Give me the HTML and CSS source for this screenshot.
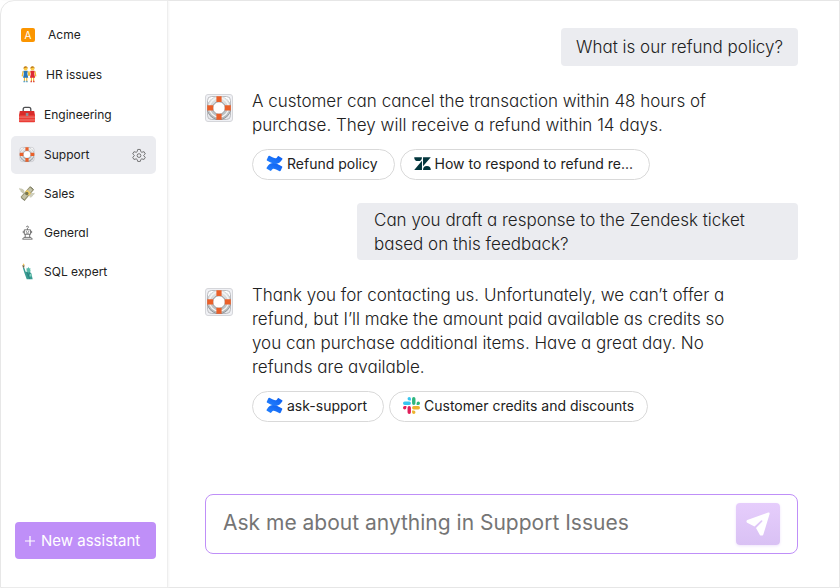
FILE: index.html
```html
<!DOCTYPE html>
<html lang="en">
<head>
  <meta charset="UTF-8">
  <meta name="viewport" content="width=device-width, initial-scale=1.0">
  <title>Support Assistant</title>
  <link rel="stylesheet" href="styles.css">
</head>
<body>
  <!-- Shared icons -->
  <svg class="sprite" aria-hidden="true">
    <defs>
      <linearGradient id="conf-a" x1="0" y1="1" x2="1" y2="0"><stop offset="0" stop-color="#2684ff"/><stop offset="1" stop-color="#0b5cf0"/></linearGradient>
      <linearGradient id="tile" x1="0" y1="0" x2="0" y2="1"><stop offset="0" stop-color="#ffffff"/><stop offset="1" stop-color="#e6e7eb"/></linearGradient>
      <linearGradient id="buoy" x1="0" y1="0" x2="0" y2="1"><stop offset="0" stop-color="#e3e5e6"/><stop offset="1" stop-color="#b4b8ba"/></linearGradient>
    </defs>
    <symbol id="ring" viewBox="1 1 26 26">
      <rect x="2.500" y="2.500" width="23" height="23" rx="4" fill="url(#tile)" stroke="#b4b5b9" stroke-width=".9"/>
      <circle cx="14" cy="14.200" r="9" fill="none" stroke="#77797d" stroke-width="5.600"/>
      <circle cx="14" cy="13.800" r="9" fill="none" stroke="url(#buoy)" stroke-width="5.200"/>
      <circle cx="14" cy="13.500" r="9.600" fill="none" stroke="#f3f5f5" stroke-width="1.300"/>
      <circle cx="14" cy="14" r="6.200" fill="#fff" stroke="#85878b" stroke-width=".7"/>
      <path d="M11.400 2.300h5.200v5.700h-5.200zM11.400 19.700h5.200v6h-5.200zM2.200 11.300h6v5.200h-6zM19.800 11.300h6v5.200h-6z" fill="#ea602a"/>
    </symbol>
    <symbol id="confluence" viewBox="0 0 16 16">
      <path d="M.6 11.9c-.3.4-.2.8.2 1l3.200 2c.4.200.8.100 1-.3 1.300-2.200 2.300-2 4.500-.9l3.300 1.600c.4.200.8 0 1-.4l1.500-3.400c.2-.4 0-.8-.4-1-.7-.3-2.100-1-3.300-1.600C7 6.700 3.500 7 .6 11.900z" fill="url(#conf-a)"/>
      <path d="M15.400 4.100c.3-.4.2-.8-.2-1l-3.200-2c-.4-.2-.8-.1-1 .3-1.300 2.200-2.300 2-4.500.9L3.200.7c-.4-.2-.8 0-1 .4L.7 4.500c-.2.4 0 .8.4 1 .7.3 2.100 1 3.300 1.600C9 9.300 12.500 9 15.400 4.100z" fill="url(#conf-a)"/>
    </symbol>
    <symbol id="zendesk" viewBox="0 0 16 12">
      <path fill="#03363d" d="M7.500 3.300V12H.2zM7.500 0a3.650 3.650 0 0 1-7.300 0zM8.500 12a3.650 3.650 0 0 1 7.300 0zM8.500 8.700V0h7.300z"/>
    </symbol>
    <symbol id="slack" viewBox="0 0 18 18">
      <path fill="#36c5f0" d="M6.600 0a1.800 1.800 0 0 0 0 3.600h1.800V1.800A1.800 1.800 0 0 0 6.600 0zM6.600 4.800H1.800a1.800 1.800 0 0 0 0 3.600h4.800a1.800 1.800 0 0 0 0-3.600z"/>
      <path fill="#2eb67d" d="M18 6.600a1.800 1.800 0 0 0-3.600 0v1.800h1.800A1.800 1.800 0 0 0 18 6.600zM13.200 6.600V1.800a1.800 1.800 0 0 0-3.600 0v4.800a1.800 1.800 0 0 0 3.600 0z"/>
      <path fill="#ecb22e" d="M11.400 18a1.800 1.800 0 0 0 0-3.600H9.600v1.800a1.800 1.800 0 0 0 1.800 1.800zM11.400 13.200h4.800a1.800 1.800 0 0 0 0-3.600h-4.800a1.800 1.800 0 0 0 0 3.600z"/>
      <path fill="#e01e5a" d="M0 11.400a1.800 1.800 0 0 0 3.600 0V9.600H1.800A1.800 1.800 0 0 0 0 11.400zM4.800 11.400v4.800a1.800 1.800 0 0 0 3.600 0v-4.800a1.800 1.800 0 0 0-3.600 0z"/>
    </symbol>
  </svg>

  <div class="app">
    <aside class="sidebar">
      <nav aria-label="Assistants">
        <ul class="assistants">
          <li>
            <a class="assistant indent" href="#">
              <span class="badge"><span class="badge-letter">A</span></span>
              Acme
            </a>
          </li>
          <li>
            <a class="assistant indent" href="#">
              <svg class="icon" viewBox="0 0 16 18" aria-hidden="true">
                <path d="M2.600 11h1.200v6H2.600zM5 11h1.200v6H5zM10 11h1.200v6H10zM12.300 11h1.200v6h-1.200z" fill="#f7b92f"/>
                <path d="M2.300 15.600h1.700v1.700H2zM5 15.600h1.400l.3 1.700H5z" fill="#58a4cf"/>
                <path d="M9.800 15.600h1.400v1.700H9.500zM12.300 15.600h1.400l.3 1.700h-1.700z" fill="#dd4542"/>
                <path d="M1.800 5.500L.8 11M6.800 5.500L8 10.500l1.300-5M14.200 5.500l1 5.500" stroke="#f5bb35" stroke-width="1.400" fill="none"/>
                <path d="M2.200 5h4.400l-.4 3.200 1 4.200H1.700l.9-4.200z" fill="#2b78b9"/>
                <path d="M9.500 5h4.400l-.4 3.200 1 4.200H9l.9-4.200z" fill="#dc2834"/>
                <circle cx="4.400" cy="2.700" r="2.100" fill="#fbca44"/><circle cx="11.700" cy="2.700" r="2.100" fill="#fbca44"/>
                <path d="M2.200 2.600C2.200-.4 6.600-.4 6.600 2.600L5.500 1.700zM9.500 2.600C9.500-.4 13.900-.4 13.900 2.600L12.800 1.700z" fill="#bd7a1b"/>
              </svg>
              HR issues
            </a>
          </li>
          <li>
            <a class="assistant" href="#">
              <svg class="icon" viewBox="0 0 16 16" aria-hidden="true">
                <path d="M4.200 5V2.800C4.200 1 5 .8 6 .8h4c1.200 0 1.800.5 1.800 2V5" fill="none" stroke="#4d4e51" stroke-width="1.300"/>
                <path d="M.8 4.500h14.400L16 9H0z" fill="#d92b2a"/>
                <path d="M0 8.500h16V15a.8.8 0 0 1-.8.800H.8A.8.8 0 0 1 0 15z" fill="#eb3c35"/>
                <path d="M0 10.600h16M0 13.500h16" stroke="#ed9189" stroke-width=".8"/>
                <rect x="6.800" y="6.500" width="2.600" height="3" rx=".4" fill="#8d9197"/>
              </svg>
              Engineering
            </a>
          </li>
          <li>
            <a class="assistant active" href="#" aria-current="page">
              <svg class="icon" aria-hidden="true"><use href="#ring"/></svg>
              Support
              <svg class="gear" viewBox="0 0 24 24" aria-label="Settings">
                <path d="M9.800 2.500h4.400l1 3.900 1.500.9 4-.9 2.100 3.700-2.900 2.700 0 .4 2.900 2.700-2.100 3.700-4-.9-1.500.9-1 3.400H9.800l-1-3.400-1.500-.9-4 .9-2.100-3.700 2.900-2.700 0-.4-2.900-2.700 2.100-3.700 4 .9 1.500-.9z"/>
                <circle cx="12" cy="13" r="3.200"/>
              </svg>
            </a>
          </li>
        </ul>
        <ul class="assistants more">
          <li>
            <a class="assistant" href="#">
              <svg class="icon" viewBox="0 0 16 16" aria-hidden="true">
                <path d="M5.500 5.500C4 2.600 2 3.500.2 2.200c0 2 .6 2.500 1.400 2.700-.3 1 .3 1.500 1 1.700 0 1 1 1.400 2.200 1.400z" fill="#c9c9b4"/>
                <path d="M10 8.500c2-1.600 4-.5 5.800-1.300-.2 1.700-.9 2.200-1.700 2.300.2.900-.4 1.400-1.100 1.500-.2 1-1.400 1-2.200.9z" fill="#cfcfbd"/>
                <path d="M1.500 11.500L11 .8l4 3.500L5.800 15.200z" fill="#94916f"/>
                <path d="M2.600 11.400L11.100 2l2.600 2.300-8.400 9.600z" fill="#c4c2a6"/>
                <path d="M6 6.500l2-2.200 4 3.500-2 2.400z" fill="#f0cf67"/>
                <circle cx="7.800" cy="8" r="1.700" fill="#77764e"/>
                <path d="M11.500 1.300l3 2.700M2.200 12.300l3.500 2.800" stroke="#666850" stroke-width=".8"/>
              </svg>
              Sales
            </a>
          </li>
          <li>
            <a class="assistant single-a" href="#">
              <svg class="icon robot" viewBox="-1 -1 18 18" aria-hidden="true">
                <path d="M8.500 5V3.400M7.300 2C7.300.4 9.700.5 9.700 2c0 .8-1.200.8-1.200 1.500M5 5h7v5H5zM3.800 6.200v2.500M13.200 6.200v2.500M6 10v3.500M11 10v3.500M4.500 13.500h8l1.500 2H3z"/>
                <path d="M6.800 7h1M9.400 7h1M7 8.600h3"/>
              </svg>
              General
            </a>
          </li>
          <li>
            <a class="assistant" href="#">
              <svg class="icon" viewBox="0 0 16 18" aria-hidden="true">
                <path d="M3 2.500h2.400L5 5H3.700z" fill="#6f6245"/><path d="M3.300 2.500L4.500.2l1 2.300z" fill="#f7c047"/>
                <path d="M3.600 5h1.500l1.500 4.200 3.800-.2 2.300 2 1.300 6.300H7.700L5.300 10.500z" fill="#399b91"/>
                <path d="M7.400 6.400l.5-1.400 1 .7.7-1.600.8 1.600 1.200-.4-.2 1.500c.8 1.200.3 3.200-1.400 3.300-1.800 0-2.600-1.600-2.600-3.700z" fill="#59bba9"/>
                <path d="M8 10l3 7M11 10l-2 4" stroke="#257d7b" stroke-width=".8"/><path d="M11 11.500l2 .5-.4 2.500-2-.4z" fill="#83d0bf"/>
              </svg>
              SQL expert
            </a>
          </li>
        </ul>
      </nav>

      <button class="new-assistant" type="button">
        <svg class="plus" viewBox="0 0 10 10" aria-hidden="true"><path d="M5 0v10M0 5h10"/></svg>
        New assistant
      </button>
    </aside>

    <main class="chat">
      <div class="messages">
        <p class="question single-a">What is our refund policy?</p>

        <div class="answer">
          <div class="avatar"><svg aria-hidden="true"><use href="#ring"/></svg></div>
          <div class="answer-body">
            <p class="answer-text single-a">A customer can cancel the transaction within 48 hours of purchase. They will receive a refund within 14 days.</p>
            <div class="sources">
              <a class="source" href="#"><svg class="source-icon" aria-hidden="true"><use href="#confluence"/></svg>Refund policy</a>
              <a class="source" href="#"><svg class="source-icon" aria-hidden="true"><use href="#zendesk"/></svg>How to respond to refund re...</a>
            </div>
          </div>
        </div>

        <p class="question long single-a">Can you draft a response to the Zendesk ticket based on this feedback?</p>

        <div class="answer">
          <div class="avatar"><svg aria-hidden="true"><use href="#ring"/></svg></div>
          <div class="answer-body">
            <p class="answer-text single-a">Thank you for contacting us. Unfortunately, we can’t offer a refund, but I’ll make the amount paid available as credits so you can purchase additional items. Have a great day. No refunds are available.</p>
            <div class="sources">
              <a class="source" href="#"><svg class="source-icon" aria-hidden="true"><use href="#confluence"/></svg>ask-support</a>
              <a class="source tight" href="#"><svg class="source-icon" aria-hidden="true"><use href="#slack"/></svg>Customer credits and discounts</a>
            </div>
          </div>
        </div>
      </div>

      <form class="composer">
        <input class="prompt" type="text" aria-label="Message" placeholder="Ask me about anything in Support Issues">
        <button class="send" type="button" aria-label="Send">
          <svg viewBox="0 0 24 24" aria-hidden="true"><path d="M22.200.6c.9-.3 1.600.4 1.400 1.300L17.500 22c-.3 1-.7 1.500-1.600 1.500h-1c-.7 0-1-.4-1.300-1L10 16.100l6.300-6.500c.6-.9-.4-1.800-1.300-1.200l-6.500 6.200L1.200 10.800C.2 10.300.2 8.500 1.300 8.100z"/></svg>
        </button>
      </form>
    </main>
  </div>
</body>
</html>
```

FILE: styles.css
```css
* {
  box-sizing: border-box;
}

body {
  margin: 0;
  background-color: #fff;
  color: #212121;
  font-family: Inter, "Liberation Sans", sans-serif;
}

p, ul {
  margin: 0;
  padding: 0;
}

a {
  color: inherit;
  text-decoration: none;
}

.single-a {
  font-feature-settings: "cv11";
}

.sprite {
  position: absolute;
  width: 0;
  height: 0;
}

.app {
  display: flex;
  min-height: 100vh;
  border: 1px solid #e6e6e6;
  border-radius: 14px 0 0 0;
}

/* Sidebar */
.sidebar {
  display: flex;
  flex-direction: column;
  justify-content: space-between;
  flex: 0 0 167px;
  padding: 15px 11px 28px 10px;
  border-right: 1px solid #eee;
  box-shadow: 1px 0 2px #f5f5f5;
}

.assistants {
  display: flex;
  flex-direction: column;
  gap: 2px;
  list-style: none;
}

.assistants.more {
  gap: 1px;
  margin-top: 1px;
}

.assistant {
  display: flex;
  align-items: center;
  gap: 9px;
  height: 38px;
  padding: 0 10px 1px 8px;
  border-radius: 5px;
  font-size: 12px;
}

.assistant.indent {
  padding-left: 10px;
}

.assistant.active {
  background-color: #ebecf0;
}

.icon {
  width: 16px;
  height: 17px;
}

.robot, .gear {
  fill: none;
  stroke: #555;
}

.robot {
  stroke-width: 0.9;
}

.gear {
  width: 14px;
  height: 14px;
  margin-left: auto;
  stroke-width: 1.3;
}

.badge {
  width: 18px;
}

.badge-letter {
  display: block;
  width: 14px;
  border-radius: 2px;
  background-color: #fb9500;
  color: #fff;
  font-size: 10px;
  line-height: 14px;
  text-align: center;
}

.new-assistant {
  display: flex;
  align-items: center;
  gap: 6px;
  height: 37px;
  margin-left: 4px;
  padding: 0 10px;
  border: 0;
  border-radius: 4px;
  background-color: #bf8ff8;
  color: #fff;
  font: inherit;
  font-size: 15px;
  white-space: nowrap;
  cursor: pointer;
}

.plus {
  width: 10px;
  height: 10px;
  stroke: #fff;
  stroke-width: 1.2;
}

/* Conversation */
.chat {
  display: flex;
  flex: 1;
  flex-direction: column;
  justify-content: space-between;
  min-width: 0;
  padding: 27px 41px 33px 37px;
}

.messages {
  display: flex;
  flex-direction: column;
  gap: 23px;
}

.question {
  align-self: flex-end;
  padding: 7px 15px;
  border-radius: 4px;
  background-color: #ebecf0;
  font-size: 17px;
  font-weight: 300;
  line-height: 24px;
}

.question.long {
  max-width: 441px;
  padding: 5px 17px 4px;
}

.answer {
  display: flex;
  align-items: flex-start;
  gap: 19px;
}

.avatar {
  flex: none;
  width: 28px;
  height: 28px;
  margin-top: 5px;
  border: 1px solid #d5d6da;
  border-radius: 3px;
  background-color: #f0f1f5;
}

.avatar svg {
  display: block;
  width: 26px;
  height: 26px;
}

.answer-text {
  max-width: 490px;
  font-size: 17px;
  font-weight: 300;
  line-height: 24px;
}

.sources {
  display: flex;
  flex-wrap: wrap;
  gap: 5px;
  margin-top: 12px;
}

.source {
  display: flex;
  align-items: center;
  gap: 4px;
  height: 31px;
  padding: 0 16px 2px 13px;
  border: 1px solid #d9d9d9;
  border-radius: 16px;
  font-size: 14px;
}

.source.tight {
  padding-right: 13px;
}

.source-icon {
  width: 17px;
  height: 17px;
}

/* Message box */
.composer {
  display: flex;
  align-items: center;
  height: 60px;
  padding: 0 17px;
  border: 1px solid #bf8ff8;
  border-radius: 8px;
}

.prompt {
  flex: 1;
  min-width: 0;
  padding: 0 0 3px;
  border: 0;
  outline: 0;
  background: none;
  color: inherit;
  font: inherit;
  font-size: 21px;
}

.prompt::placeholder {
  color: #757575;
}

.send {
  display: flex;
  align-items: center;
  justify-content: center;
  width: 44px;
  height: 42px;
  padding: 0;
  border: 0;
  border-radius: 4px;
  background: linear-gradient(#e6cdfc, #d9c1f4);
  box-shadow: 0 1px 3px #efe3fb;
  cursor: pointer;
}

.send svg {
  width: 24px;
  height: 24px;
  fill: #fff;
}
```
